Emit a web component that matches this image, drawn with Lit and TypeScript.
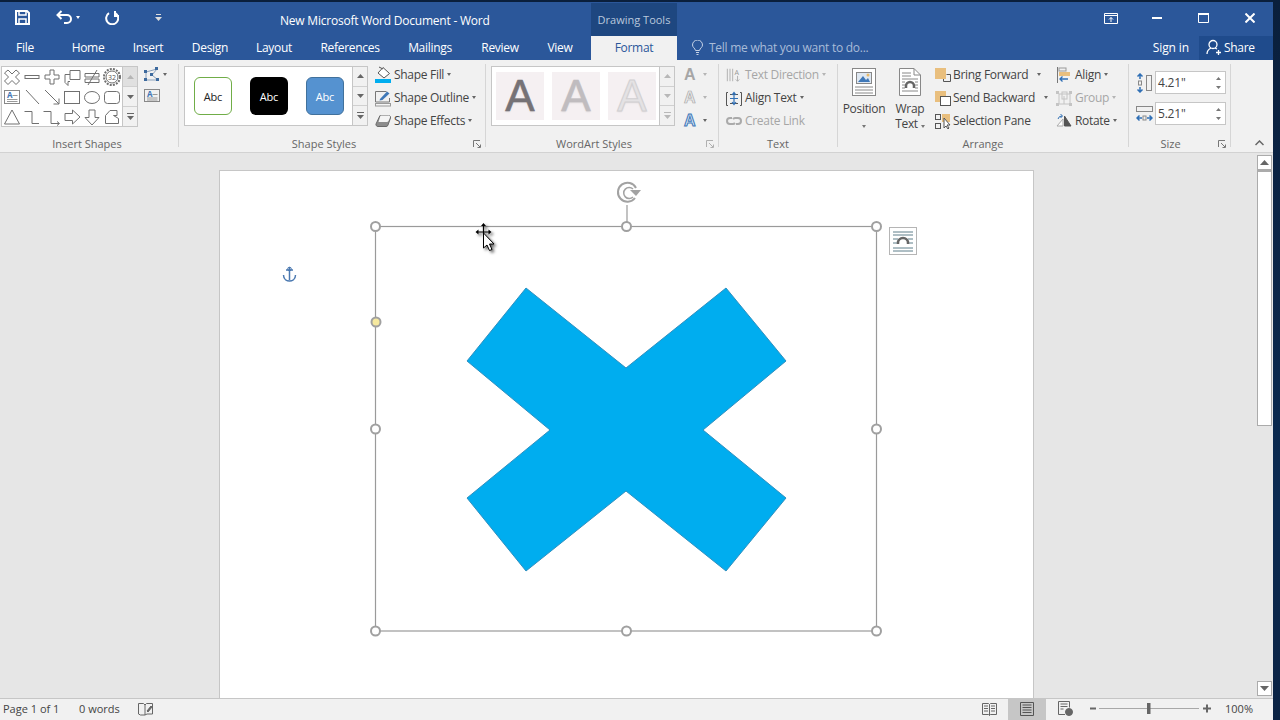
import { LitElement, html, svg, css } from "lit";
import { customElement } from "lit/decorators.js";

const S = "#707070";
const ic = (w: number, h: number, c: unknown) =>
  html`<svg width=${w} height=${h} viewBox="0 0 ${w} ${h}" fill="none" stroke=${S} stroke-width="1">${c}</svg>`;

const shapeCells = [
  svg`<path d="M6 3L10 7L14 3L17.500 6L13.500 10L17.500 14L14 17.500L10 13.500L6 17.500L2.500 14L6.500 10L2.500 6Z"/>`,
  svg`<rect x="3" y="8.500" width="14" height="3"/>`,
  svg`<path d="M8 3h4v5h5v4h-5v5H8v-5H3V8h5z"/>`,
  svg`<path d="M8 3.500h10v9H8zM8 7.500H3v8l3 3v-4h2"/>`,
  svg`<path d="M3 6.500h14v3.500H3zM3 12h14v3.500H3zM15 3L6 18"/>`,
  svg`<circle cx="10" cy="10" r="8" stroke-dasharray="2 1.200" stroke-width="2"/><circle cx="10" cy="10" r="6"/><text x="10" y="12.500" font-size="7" fill="#555" stroke="none" text-anchor="middle" font-family="Open Sans">32</text>`,
  svg`<rect x="2.500" y="3.500" width="15" height="13" stroke="#888"/><text x="5" y="10.500" font-size="8" font-weight="700" fill="#3f74b5" stroke="none" font-family="Open Sans">A</text><path d="M10.500 8.500h5M5 12.500h10.500M5 14.500h10.500" stroke="#999"/>`,
  svg`<path d="M4 3L17 17"/>`,
  svg`<path d="M3 3L17 17M17 11.500V17H11.500"/>`,
  svg`<rect x="2.500" y="4.500" width="15" height="12"/>`,
  svg`<ellipse cx="10" cy="10.500" rx="7.500" ry="6"/>`,
  svg`<rect x="2.500" y="4.500" width="15" height="12" rx="3"/>`,
  svg`<path d="M10 3L17.500 17H2.500Z"/>`,
  svg`<path d="M2.500 4.500H10V16.500H17"/>`,
  svg`<path d="M1.500 4.500H9V16.500H17M15 14.500L17.500 16.500L15 18.500"/>`,
  svg`<path d="M3 6.500h7.500V3L18 10l-7.500 7v-3.500H3z"/>`,
  svg`<path d="M7 3h6v7.500h4L10 18l-7-7.500h4z"/>`,
  svg`<path d="M3.500 8.500L8 3.500h7v5h-3.500l5 3v5H3.500z"/>`,
];

const tri = (c = "#666") => html`<span class="tri" style="--c:${c}"></span>`;
const launcher = (c = "#777") => html`<svg class="launcher" width="8" height="8" viewBox="0 0 8 8" fill="none" stroke=${c}><path d="M.5 7V.5H7M3 3l4 4M4.500 7.500h3v-3"/></svg>`;
const scrollCol = (disabled = false) => html`<div class="gscroll ${disabled ? "dis" : ""}">
  <div class="up"><svg width="7" height="4"><path d="M0 4L3.500 0L7 4Z"/></svg></div>
  <div><svg width="7" height="4"><path d="M0 0L3.500 4L7 0Z"/></svg></div>
  <div><svg width="7" height="7"><path d="M0 0h7v1H0zM0 3L3.500 7L7 3Z"/></svg></div>
</div>`;

const textBoxIcon = ic(16, 15, svg`<rect x=".5" y="1.500" width="15" height="12" stroke="#888"/><text x="3" y="8.500" font-size="8" font-weight="700" fill="#3f74b5" stroke="none" font-family="Open Sans">A</text><path d="M8.500 6.500h5M3 10h10.500M3 12h10.500" stroke="#999"/>`);

const cmd = (icon: unknown, label: string, dim = false, arrow = true, cls = "") =>
  html`<div class="cmd ${dim ? "dim" : ""} ${cls}"><span class="cico">${icon}</span><span>${label}</span>${arrow ? tri(dim ? "#b5b5b5" : "#666") : ""}</div>`;

@customElement("app-root")
export class AppRoot extends LitElement {
  static styles = css`
    :host { display: block; width: 1280px; height: 720px; overflow: hidden; background: linear-gradient(#0a1f3c, #0b2b52 70%, #0b2344); font-family: "Open Sans", "Noto Sans", sans-serif; color: #444; font-size: 12px; }
    .win { width: 1273px; height: 718px; margin-top: 2px; display: flex; flex-direction: column; }
    .title { height: 34px; background: #2b579a; display: flex; color: #fff; position: relative; }
    .qat { width: 591px; display: flex; align-items: center; position: relative; }
    .qat svg { flex: none; }
    .q1 { margin-left: 15px; margin-top: -4px; }
    .q2 { margin-left: 26px; margin-top: -4px; }
    .q3 { margin-left: 13px; margin-top: -4px; }
    .q4 { margin-left: 25px; margin-top: -4px; }
    .q5 { margin-left: 36px; margin-top: -4px; }
    .doc-title { margin-left: 118px; white-space: nowrap; margin-top: 2px; letter-spacing: -.22px; }
    .ctx { width: 86px; background: #1e4780; margin-top: 1px; display: flex; align-items: center; justify-content: center; color: #b9c7dc; font-size: 11px; }
    .winbtns { margin-left: auto; display: flex; align-items: center; margin-top: -2px; }
    .winbtns svg { flex: none; }
    .w1 { margin-right: 34px; }
    .w2 { margin-right: 36px; }
    .w3 { margin-right: 36px; }
    .w4 { margin-right: 18px; }
    .tabs { height: 24px; background: #2b579a; display: flex; color: #fff; align-items: stretch; }
    .tablist { display: grid; grid-template-columns: 50px 76px 44px 80px 48px 104px 56px 84px 36px; width: 591px; }
    .tablist span { display: flex; align-items: center; justify-content: center; letter-spacing: -.3px; padding-bottom: 2px; }
    .format { width: 86px; background: #f1f1f1; color: #2b579a; display: flex; align-items: center; justify-content: center; letter-spacing: -.3px; padding-bottom: 2px; box-sizing: border-box; }
    .tell { margin-left: 15px; display: flex; align-items: center; gap: 6px; color: #a9bcd8; letter-spacing: -.26px; padding-bottom: 2px; }
    .signin { margin-left: auto; align-self: center; letter-spacing: -.12px; padding-bottom: 2px; }
    .share { margin-left: 10px; width: 74px; background: #1f4b8c; display: flex; align-items: center; gap: 3px; padding: 0 0 2px 7px; box-sizing: border-box; letter-spacing: -.3px; }

    .ribbon { height: 93px; box-sizing: border-box; background: #f1f1f1; border-bottom: 1px solid #d2d2d2; display: flex; }
    .group { display: flex; flex-direction: column; flex: none; }
    .sep { width: 1px; background: #d6d6d6; margin: 4px 0 5px; flex: none; }
    .body { height: 75px; box-sizing: border-box; padding-top: 3px; display: flex; }
    .label { display: flex; align-items: center; height: 17px; font-size: 11px; color: #666; }
    .label > span { flex: 1; text-align: center; white-space: nowrap; }
    .launcher { margin-right: 4px; flex: none; }
    .g1 { width: 178px; } .g2 { width: 306px; } .g3 { width: 232px; } .g4 { width: 118px; } .g5 { width: 290px; } .g6 { width: 101px; }
    .g1 .label { padding-right: 4px; }
    .g2 .label > span { padding-right: 4px; }
    .g3 .label > span { padding-right: 4px; }
    .g6 .label > span { padding-right: 6px; }
    .col { display: flex; flex-direction: column; }
    .cmd { height: 23px; display: flex; align-items: center; white-space: nowrap; letter-spacing: -.3px; }
    .cmd.dim { color: #a6a6a6; }
    .cico { width: 16px; height: 20px; display: flex; align-items: center; justify-content: center; margin-right: 3px; flex: none; }
    .tri { display: inline-block; width: 0; height: 0; border: 2.500px solid transparent; border-top: 3px solid var(--c); border-bottom: 0; margin-left: 3px; flex: none; }
    .wide .tri { margin-left: 9px; }

    .gallery { display: flex; background: #fff; border: 1px solid #c6c6c6; height: 60px; margin-top: 3px; box-sizing: border-box; flex: none; }
    .gscroll { width: 14px; display: flex; flex-direction: column; border-left: 1px solid #c6c6c6; flex: none; margin-left: auto; background: #f1f1f1; }
    .gscroll > div { flex: 1; display: flex; align-items: center; justify-content: center; border-bottom: 1px solid #d0d0d0; }
    .gscroll > div:last-child { border-bottom: 0; }
    .gscroll svg { fill: #666; }
    .gscroll.dis svg { fill: #b8b8b8; }
    .g1 .up { background: #e0e0e0; }
    .g1 .up svg { fill: #b5b5b5; }
    .g1 .gallery { width: 137px; height: 61px; margin-left: 1px; }
    .shapes { display: grid; grid-template-columns: repeat(6, 20px); grid-auto-rows: 20px; align-content: center; }
    .shapes svg { display: block; }
    .edit { margin-left: 6px; padding-top: 1px; }
    .edit > div { height: 21px; display: flex; align-items: center; }
    .g2 .gallery, .g3 .gallery { width: 184px; margin-left: 5px; }
    .abcs { display: flex; gap: 18px; padding-left: 9px; align-items: center; }
    .abc { width: 38px; height: 38px; box-sizing: border-box; border-radius: 6px; display: flex; align-items: center; justify-content: center; font-size: 11px; letter-spacing: -.2px; }
    .a1 { background: #fff; border: 1px solid #70ad47; color: #222; }
    .a2 { background: #000; color: #fff; }
    .a3 { background: #5592d0; border: 1px solid #41719c; color: #fff; }
    .g2 .col { margin-left: 7px; }
    .arts { display: flex; gap: 8px; padding-left: 4px; align-items: center; }
    .art { width: 48px; height: 48px; background: #f5f0f2; display: flex; align-items: center; justify-content: center; font-family: "Liberation Sans", sans-serif; font-size: 44px; line-height: 48px; text-shadow: 0 1px 2px rgba(0, 0, 0, .1); }
    .art1 { color: #767276; -webkit-text-stroke: .6px #767276; }
    .art2 { color: #c0bcbf; -webkit-text-stroke: .6px #c0bcbf; }
    .art3 { color: #e4e2e4; -webkit-text-stroke: 1px #d2d0d2; }
    .mini { margin-left: 9px; }
    .mini > div { height: 23px; display: flex; align-items: center; font-family: "Liberation Sans", sans-serif; font-size: 16px; width: 34px; }
    .mini .tri { margin-left: 7px; -webkit-text-stroke: 0; }
    .m1 { color: #a6a6a6; font-weight: 700; }
    .m2 { color: #e8e8e8; -webkit-text-stroke: .7px #a8a8a8; font-weight: 700; }
    .m3 { color: #dbe8f6; -webkit-text-stroke: 1px #3f78b8; font-weight: 700; }
    .g4 .body { padding-left: 7px; }
    .big { width: 46px; display: flex; flex-direction: column; align-items: center; flex: none; line-height: 15px; letter-spacing: -.3px; }
    .big svg.bi { margin: 5px 0 5px; flex: none; }
    .g5 .body { padding-left: 3px; }
    .arr { margin-left: 2px; width: 121px; flex: none; }
    .arr .cico { margin-right: 2px; }
    .bigtri .tri { margin-left: 0; margin-top: 5px; }
    .g6 .body { padding: 11px 0 0 7px; flex-direction: column; gap: 8px; }
    .szrow { display: flex; align-items: center; gap: 2px; }
    .input { width: 71px; height: 23px; box-sizing: border-box; background: #fff; border: 1px solid #c6c6c6; display: flex; align-items: center; padding-left: 2px; letter-spacing: -.2px; }
    .spin { margin-left: auto; margin-right: 4px; display: flex; }
    .collapse { flex: 1; display: flex; align-items: flex-end; justify-content: center; padding: 0 0 6px 14px; }

    .docarea { flex: 1; min-height: 0; background: #e6e6e6; display: flex; }
    .canvas { flex: 1; overflow: hidden; }
    .page { margin: 17px 0 0 219px; width: 815px; height: 600px; box-sizing: border-box; background: #fff; border: 1px solid #c6c6c6; position: relative; }
    .page > svg { position: absolute; left: 0; top: 0; }
    .sb { width: 16px; box-sizing: border-box; display: flex; flex-direction: column; padding: 2px 1px 2px 0; flex: none; }
    .sbb { height: 15px; background: #fff; border: 1px solid #ababab; box-sizing: border-box; display: flex; align-items: center; justify-content: center; flex: none; }
    .thumb { height: 256px; background: #fff; border: 1px solid #ababab; border-top-width: 2px; box-sizing: border-box; flex: none; }
    .sbb svg { fill: #666; }
    .track { flex: 1; }

    .status { height: 22px; box-sizing: border-box; background: #f1f1f1; border-top: 1px solid #c6c6c6; display: flex; align-items: center; font-size: 11px; color: #444; }
    .page-count { margin-left: 3px; width: 76px; margin-bottom: 2px; }
    .words { width: 59px; margin-bottom: 2px; }
    .st-ed { margin-bottom: 2px; }
    .view { width: 38px; height: 21px; display: flex; align-items: center; justify-content: center; flex: none; padding-bottom: 2px; box-sizing: border-box; }
    .view.on { background: #c6c6c6; }
    .vw { margin-left: auto; }
    .zoom { display: flex; align-items: center; margin-left: 3px; margin-bottom: 2px; }
    .pct { margin: 0 20px 0 13px; }
  `;

  render() {
    return html`<div class="win">
      <div class="title">
        <div class="qat">
          <svg class="q1" width="15" height="15" viewBox="0 0 15 15" fill="none" stroke="#fff" stroke-width="2"><path d="M1 1h11l2 2v11H1z"/><path d="M4 1v4h7V1M4 14V9h7v5" stroke-width="1.500"/></svg>
          <svg class="q2" width="17" height="14" viewBox="0 0 17 14" fill="none" stroke="#fff" stroke-width="2"><path d="M5.500 1L1.500 5l4 4M1.500 5H11a4 4 0 0 1 0 8H8"/></svg>
          <span class="tri q3" style="--c:#fff"></span>
          <svg class="q4" width="14" height="15" viewBox="0 0 14 15" fill="none" stroke="#fff" stroke-width="2"><path d="M4 3.200A6 6 0 1 0 10 3M10 1v5h4" /></svg>
          <svg class="q5" width="7" height="7" viewBox="0 0 7 7" fill="#ddd"><path d="M1 0h5v1H1zM0 3h7L3.500 7z"/></svg>
          <span class="doc-title">New Microsoft Word Document - Word</span>
        </div>
        <div class="ctx">Drawing Tools</div>
        <div class="winbtns">
          <svg class="w1" width="14" height="11" viewBox="0 0 14 11" fill="none" stroke="#fff"><path d="M.5.500h13v10H.5zM.5 2.500h13M7 9V4.500M5 6.500l2-2 2 2"/></svg>
          <svg class="w2" width="10" height="2"><rect width="10" height="2" fill="#fff"/></svg>
          <svg class="w3" width="11" height="10" viewBox="0 0 11 10" fill="none" stroke="#fff"><path d="M.5 1h10v8.500H.5z" stroke-width="1"/><path d="M0 1h11" stroke-width="2"/></svg>
          <svg class="w4" width="10" height="10" viewBox="0 0 10 10" fill="none" stroke="#fff" stroke-width="2"><path d="M.5.500l9 9M9.500.500l-9 9"/></svg>
        </div>
      </div>
      <div class="tabs">
        <div class="tablist">${["File","Home","Insert","Design","Layout","References","Mailings","Review","View"].map(t => html`<span>${t}</span>`)}</div>
        <div class="format">Format</div>
        <div class="tell"><svg width="11" height="15" viewBox="0 0 11 15" fill="none" stroke="#c5d2e6"><path d="M3.500 10.500C3 8 .5 7.500.5 5a5 5 0 0 1 10 0c0 2.500-2.500 3-3 5.500zM4 12.500h3M4.500 14.500h2"/></svg>Tell me what you want to do...</div>
        <div class="signin">Sign in</div>
        <div class="share"><svg width="15" height="16" viewBox="0 0 15 16" fill="none" stroke="#fff" stroke-width="1.300"><circle cx="7" cy="5.500" r="4"/><path d="M1 15c0-3 2-5 4-6M9 9l2 1M10 13.500h5M12.500 11v5"/></svg>Share</div>
      </div>

      <div class="ribbon">
        <div class="group g1">
          <div class="body">
            <div class="gallery">
              <div class="shapes">${shapeCells.map(c => html`<svg width="20" height="20" viewBox="0 0 20 20" fill="none" stroke=${S}>${c}</svg>`)}</div>
              ${scrollCol()}
            </div>
            <div class="col edit">
              <div><svg width="16" height="15" viewBox="0 0 16 15" fill="none" stroke="#8aa0ba"><path d="M2 5L13 2M2 5L2 13L14 13L8 8L13 2"/><g fill="#3d6a9e" stroke="none"><rect x="0" y="3" width="3" height="3"/><rect x="11" y="0" width="3" height="3"/><rect x="6" y="6" width="3" height="3"/><rect x="0" y="11" width="3" height="3"/><rect x="12" y="11" width="3" height="3"/></g></svg>${tri()}</div>
              <div>${textBoxIcon}</div>
            </div>
          </div>
          <div class="label"><span>Insert Shapes</span></div>
        </div>
        <div class="sep"></div>
        <div class="group g2">
          <div class="body">
            <div class="gallery">
              <div class="abcs"><div class="abc a1">Abc</div><div class="abc a2">Abc</div><div class="abc a3">Abc</div></div>
              ${scrollCol()}
            </div>
            <div class="col">
              ${cmd(ic(16, 18, svg`<path d="M8 1.500L14.500 7.500L9 12L3 7Z" fill="#fff" stroke="#555"/><path d="M4 1L8 3" stroke="#555"/><rect x="0" y="13" width="16" height="4" fill="#00adef" stroke="none"/>`), "Shape Fill")}
              ${cmd(ic(16, 18, svg`<path d="M.5 2.500h11M.5 2.500V13h14V9" stroke="#777"/><path d="M5 10L12 2.500L14.500 4.500L7.500 11L4.500 11.500Z" fill="#3f78b8" stroke="none"/><rect x=".5" y="14.500" width="15" height="2.500" fill="#f5f5f5" stroke="#999"/>`), "Shape Outline")}
              ${cmd(ic(16, 18, svg`<path d="M5 3.500h8.500a2 2 0 0 1 2 2.500L13 13a2 2 0 0 1-2 1.500H3A2 2 0 0 1 1 12Z" fill="#8c8c8c" stroke="#6a6a6a"/><path d="M5.500 3.500h8a1.500 1.500 0 0 1 1.500 2L13.500 9a2 2 0 0 1-2 1H3.500Z" fill="#f4f4f4" stroke="none"/>`), "Shape Effects")}
            </div>
          </div>
          <div class="label"><span>Shape Styles</span>${launcher()}</div>
        </div>
        <div class="sep"></div>
        <div class="group g3">
          <div class="body">
            <div class="gallery">
              <div class="arts"><div class="art art1">A</div><div class="art art2">A</div><div class="art art3">A</div></div>
              ${scrollCol(true)}
            </div>
            <div class="col mini">
              <div class="m1">A${tri("#b5b5b5")}</div>
              <div class="m2">A${tri("#b5b5b5")}</div>
              <div class="m3">A${tri()}</div>
            </div>
          </div>
          <div class="label"><span>WordArt Styles</span>${launcher("#b0b0b0")}</div>
        </div>
        <div class="sep"></div>
        <div class="group g4">
          <div class="body">
            <div class="col">
              ${cmd(ic(18, 18, svg`<path d="M1.500 2v14M4.500 2v14M7.500 2v14M13 10v6M13 16l-2-2M13 16l2-2" stroke="#aaa"/><text x="9.500" y="8.500" font-size="8" fill="#999" stroke="none" font-family="Open Sans">A</text>`), "Text Direction", true)}
              ${cmd(ic(16, 18, svg`<path d="M.5 3.500V16.500H2M.5 3.500H2M15.500 3.500V16.500H14M15.500 3.500H14M4 5.500h8M4 14.500h8" stroke="#555"/><path d="M8 9V3.500M6 6l2-2.500L10 6M8 10v5.500M6 13l2 2.500L10 13M4 9.500h8" stroke="#2f6fb5" stroke-width="1.200"/>`), "Align Text")}
              ${cmd(ic(16, 18, svg`<path d="M6 6H4a3 3 0 0 0 0 6h3a3 3 0 0 0 2-1M10 12h2a3 3 0 0 0 0-6H9a3 3 0 0 0-2 1" stroke="#aaa" stroke-width="2"/>`), "Create Link", true, false)}
            </div>
          </div>
          <div class="label"><span>Text</span></div>
        </div>
        <div class="sep"></div>
        <div class="group g5">
          <div class="body">
            <div class="big">
              <svg class="bi" width="24" height="28" viewBox="0 0 24 28" fill="none" stroke="#888"><rect x=".5" y=".5" width="23" height="27" fill="#fff"/><rect x="4.500" y="4.500" width="15" height="11" fill="#dfe8f2" stroke="#888"/><path d="M6 14l5-6 3 4 2-2 2 4z" fill="#3f78b8" stroke="none"/><circle cx="16" cy="7" r="1.500" fill="#e8b96a" stroke="none"/><path d="M3 19h18M3 22h18M3 25h18"/></svg>
              <span>Position</span>
              <span class="bigtri">${tri("#777")}</span>
            </div>
            <div class="big">
              <svg class="bi" width="22" height="28" viewBox="0 0 22 28" fill="none" stroke="#888"><path d="M.5.500H15L21.500 7v20.500H.5z" fill="#fff"/><path d="M15 .5V7h6.500M3 5h9M3 8h9M3 11h16M3 14h3M16 14h3M3 17h3M16 17h3M3 20h3M16 20h3M3 23h16"/><path d="M7 20v-2a4 4 0 0 1 8 0v2" stroke="#666" stroke-width="2.500"/></svg>
              <span>Wrap</span>
              <span>Text${tri("#777")}</span>
            </div>
            <div class="col arr">
              ${cmd(ic(16, 18, svg`<rect x="0" y="2" width="11" height="11" fill="#e9bf7e" stroke="none"/><path d="M11.500 8.500H15.500V15.500H8.500V13" stroke="#555"/>`), "Bring Forward", false, true, "wide")}
              ${cmd(ic(16, 18, svg`<rect x="0" y="2" width="11" height="11" fill="#e9bf7e" stroke="none"/><rect x="5.500" y="7.500" width="10" height="9" fill="#fff" stroke="#555"/>`), "Send Backward", false, true, "wide")}
              ${cmd(ic(16, 18, svg`<rect x=".5" y="2.500" width="5" height="5" stroke="#555"/><rect x=".5" y="11.500" width="5" height="5" stroke="#555"/><rect x="7" y="2" width="8" height="8" fill="#e9bf7e" stroke="none"/><path d="M9 6v10l2-2 2 3 1-1-2-3h3z" fill="#fff" stroke="#555"/>`), "Selection Pane", false, false)}
            </div>
            <div class="col">
              ${cmd(ic(16, 18, svg`<path d="M1.500 1v16" stroke="#777"/><rect x="3" y="2" width="7" height="3" fill="none" stroke="#999"/><rect x="3" y="6" width="11" height="4" fill="#e9bf7e" stroke="none"/><path d="M12 13H4M6.500 10.500L4 13l2.500 2.500" stroke="#2f6fb5" stroke-width="1.300"/>`), "Align")}
              ${cmd(ic(16, 18, svg`<g stroke="#c4c4c4"><rect x="3" y="5" width="11" height="10"/><rect x="6" y="3" width="5" height="7"/><path d="M8 7v8"/></g><g fill="#c4c4c4" stroke="none"><rect x="0" y="2" width="3" height="3"/><rect x="13" y="2" width="3" height="3"/><rect x="0" y="14" width="3" height="3"/><rect x="13" y="14" width="3" height="3"/></g>`), "Group", true)}
              ${cmd(ic(16, 18, svg`<path d="M1 14L7 7V14Z" fill="#fff" stroke="#aaa"/><path d="M8.500 14V4L15 14Z" fill="#555" stroke="#555"/><path d="M2 7a4 4 0 0 1 4-3M4.500 2L6.500 4L4.500 6" stroke="#2f6fb5"/>`), "Rotate")}
            </div>
          </div>
          <div class="label"><span>Arrange</span></div>
        </div>
        <div class="sep"></div>
        <div class="group g6">
          <div class="body">
            <div class="szrow">
              <svg width="17" height="20" viewBox="0 0 17 20" fill="none" stroke="#888"><rect x="10.500" y="2.500" width="5" height="15"/><path d="M4 1v5M1.500 3.500L4 1l2.500 2.500M4 19v-5M1.500 16.500L4 19l2.500-2.500" stroke="#2f6fb5" stroke-width="1.500"/><rect x="2.500" y="8" width="3" height="4"/></svg>
              <div class="input">4.21"<span class="spin"><svg width="5" height="12" fill="#777"><path d="M0 3L2.500 0L5 3ZM0 9L2.500 12L5 9Z"/></svg></span></div>
            </div>
            <div class="szrow">
              <svg width="17" height="20" viewBox="0 0 17 20" fill="none" stroke="#888"><rect x=".5" y="2.500" width="16" height="5"/><path d="M1 14h5M3.500 11.500L1 14l2.500 2.500M16 14h-5M13.500 11.500L16 14l-2.500 2.500" stroke="#2f6fb5" stroke-width="1.500"/><rect x="7" y="12" width="3" height="4"/></svg>
              <div class="input">5.21"<span class="spin"><svg width="5" height="12" fill="#777"><path d="M0 3L2.500 0L5 3ZM0 9L2.500 12L5 9Z"/></svg></span></div>
            </div>
          </div>
          <div class="label"><span>Size</span>${launcher()}</div>
        </div>
        <div class="sep"></div>
        <div class="collapse"><svg width="9" height="6" viewBox="0 0 9 6" fill="none" stroke="#666" stroke-width="1.500"><path d="M.5 5L4.500 1L8.500 5"/></svg></div>
      </div>

      <div class="docarea">
        <div class="canvas">
          <div class="page">
            <svg width="813" height="527" viewBox="220 171 813 527" fill="none">
              <defs><filter id="sh" x="-50%" y="-50%" width="200%" height="200%"><feDropShadow dx="2" dy="2" stdDeviation="1.500" flood-color="#000" flood-opacity=".6"/></filter></defs>
              <path d="M289.500 267v13M286 270h7M283.500 275c0 5 4 6 6 6s6-1 6-6" stroke="#4a78b0" stroke-width="1.500"/>
              <circle cx="289.500" cy="269" r="1.800" stroke="#4a78b0"/>
              <polygon points="526,288 626,368 726,288 786,361 703,430 786,498 726,571 626,491 526,571 467,498 550,430 467,361" fill="#00adef" stroke="#2f8fbf" stroke-width="1"/>
              <rect x="375.500" y="226.500" width="501" height="404.500" stroke="#9a9a9a" stroke-width="1.200"/>
              <path d="M627 205V227" stroke="#9a9a9a" stroke-width="1.200"/>
              <path d="M635 198A9.500 9.500 0 1 1 636 188" stroke="#a2a2a2" stroke-width="2"/>
              <path d="M633 189A5.500 5.500 0 1 0 633 197" stroke="#a2a2a2" stroke-width="1.500"/>
              <path d="M630 190H641L636 196Z" fill="#a2a2a2"/>
              <g fill="#fff" stroke="#a0a0a0" stroke-width="2">
                <circle cx="375.500" cy="226.500" r="4.500"/><circle cx="626.500" cy="226.500" r="4.500"/><circle cx="876.500" cy="226.500" r="4.500"/>
                <circle cx="375.500" cy="429" r="4.500"/><circle cx="876.500" cy="429" r="4.500"/>
                <circle cx="375.500" cy="631" r="4.500"/><circle cx="626.500" cy="631" r="4.500"/><circle cx="876.500" cy="631" r="4.500"/>
                <circle cx="376" cy="322" r="4.500" fill="#f6e99f"/>
              </g>
              <rect x="889.500" y="227.500" width="27" height="27" fill="#fff" stroke="#b5b5b5"/>
              <path d="M893 232h20M893 235h20M893 248h20M893 251h20M893 239h5M908 239h5M893 243h4M909 243h4" stroke="#5f7f8a"/>
              <path d="M898 244v-1a5 5 0 0 1 10 0v1" stroke="#666" stroke-width="2.500"/>
              <g filter="url(#sh)">
                <path d="M483.500 226v8M478 232h11" stroke="#000" stroke-width="1.200"/>
                <path d="M483.500 223l-2.500 3h5zM475.500 232l3-2.500v5zM491.500 232l-3-2.500v5z" fill="#000"/>
                <path d="M483.500 233v15l3.500-3 2.500 5.500 2.500-1-2.500-5.500h4.500z" fill="#fff" stroke="#000"/>
              </g>
            </svg>
          </div>
        </div>
        <div class="sb">
          <div class="sbb"><svg width="9" height="5"><path d="M0 5L4.500 0L9 5Z"/></svg></div>
          <div class="thumb"></div>
          <div class="track"></div>
          <div class="sbb"><svg width="9" height="5"><path d="M0 0L4.500 5L9 0Z"/></svg></div>
        </div>
      </div>

      <div class="status">
        <span class="page-count">Page 1 of 1</span>
        <span class="words">0 words</span>
        <svg class="st-ed" width="16" height="14" viewBox="0 0 16 14" fill="none" stroke="#666"><path d="M.5 1.500h5L7 3v10H2.500L.5 12zM7 3l1.500-1.500h6v10.500H9l-2 1"/><path d="M9 9l4-5 1 1-4 5z" fill="#666"/></svg>
        <div class="view vw"><svg width="15" height="14" viewBox="0 0 15 14" fill="none" stroke="#666"><path d="M.5 1.500h6l1 1 1-1h6v11h-6l-1 1-1-1h-6zM7.500 2.500v11M2 4h4M2 6.500h4M2 9h4M9 4h4M9 6.500h4M9 9h4"/></svg></div>
        <div class="view on"><svg width="14" height="14" viewBox="0 0 14 14" fill="none" stroke="#555"><path d="M.5.500h13v13H.5zM2.500 3h9M2.500 5.500h9M2.500 8h9M2.500 10.500h9"/></svg></div>
        <div class="view"><svg width="15" height="15" viewBox="0 0 15 15" fill="none" stroke="#666"><path d="M7 13.500H.5V.5h11v6M2.500 3h7M2.500 5.500h7M2.500 8h3"/><circle cx="11" cy="11" r="3.500" fill="#666"/></svg></div>
        <div class="zoom">
          <svg width="125" height="13" viewBox="0 0 125 13" fill="none"><path d="M3 6.500h6" stroke="#666" stroke-width="2"/><path d="M12 6.500h100" stroke="#a8a8a8"/><rect x="60" y="1" width="3.500" height="11" fill="#666"/><path d="M116 6.500h8M120 2.500v8" stroke="#666" stroke-width="2"/></svg>
          <span class="pct">100%</span>
        </div>
      </div>
    </div>`;
  }
}
